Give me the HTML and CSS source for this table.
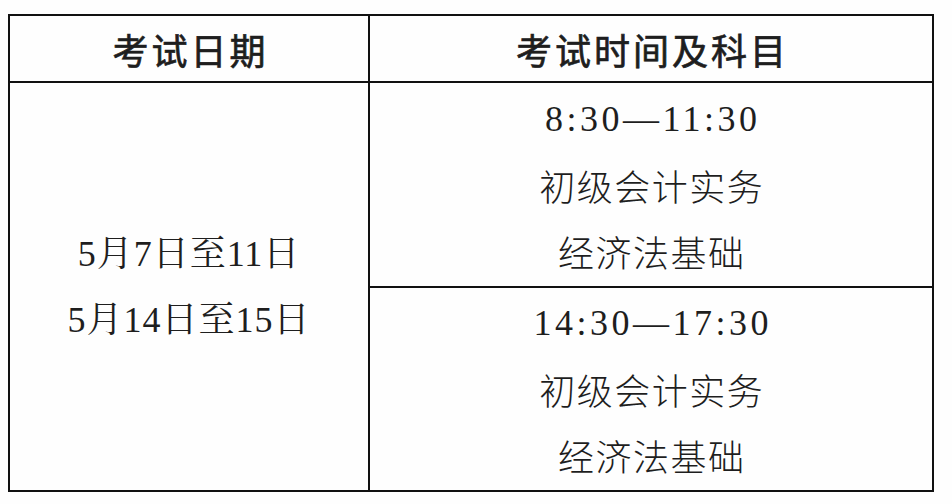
FILE: index.html
```html
<!DOCTYPE html>
<html lang="zh-CN">
<head>
<meta charset="utf-8">
<title>考试安排</title>
<link rel="stylesheet" href="styles.css">
</head>
<body>
<div class="page">
  <div class="sheet">
    <div class="cell head left">考试日期</div>
    <div class="cell head right">考试时间及科目</div>
    <div class="cell dates left">
      <div class="line date">5月7日至11日</div>
      <div class="line date">5月14日至15日</div>
    </div>
    <div class="cell slot right first">
      <div class="line time">8:30—11:30</div>
      <div class="line subj">初级会计实务</div>
      <div class="line subj">经济法基础</div>
    </div>
    <div class="cell slot right">
      <div class="line time">14:30—17:30</div>
      <div class="line subj">初级会计实务</div>
      <div class="line subj">经济法基础</div>
    </div>
  </div>
</div>
</body>
</html>
```

FILE: styles.css
```css
html, body {
  margin: 0;
  padding: 0;
  background: #fefefe;
}

.page {
  padding: 14px 0 0 8px;
}

.sheet {
  box-sizing: border-box;
  width: 926px;
  height: 478px;
  border: 2px solid #111;
  display: grid;
  grid-template-columns: 360px 1fr;
  grid-template-rows: 67px 205px 1fr;
  color: #1e1e1e;
}

.cell {
  box-sizing: border-box;
  display: flex;
  flex-direction: column;
  align-items: center;
  justify-content: center;
}

.cell.left {
  border-right: 2px solid #111;
}

.head {
  border-bottom: 2px solid #111;
  font-family: "Noto Sans CJK SC", sans-serif;
  font-weight: 400;
  -webkit-text-stroke: 0.7px #1e1e1e;
  font-size: 36px;
  letter-spacing: 3px;
  padding-left: 3px;
  line-height: 1;
}

.dates {
  grid-row: 2 / span 2;
  grid-column: 1;
}

.slot.first {
  border-bottom: 2px solid #111;
}

.line {
  line-height: 66px;
  height: 66px;
  white-space: nowrap;
}

.date {
  font-family: "Liberation Serif", "Noto Serif CJK SC", "Noto Sans CJK SC", serif;
  font-size: 36px;
  letter-spacing: 1px;
}

.time {
  font-family: "Liberation Serif", "Noto Sans CJK SC", serif;
  font-size: 36px;
  letter-spacing: 3.5px;
  padding-left: 3.5px;
}

.subj {
  font-family: "Noto Sans CJK SC", sans-serif;
  font-weight: 300;
  font-size: 36px;
  letter-spacing: 1.5px;
  padding-left: 1.5px;
}
```
